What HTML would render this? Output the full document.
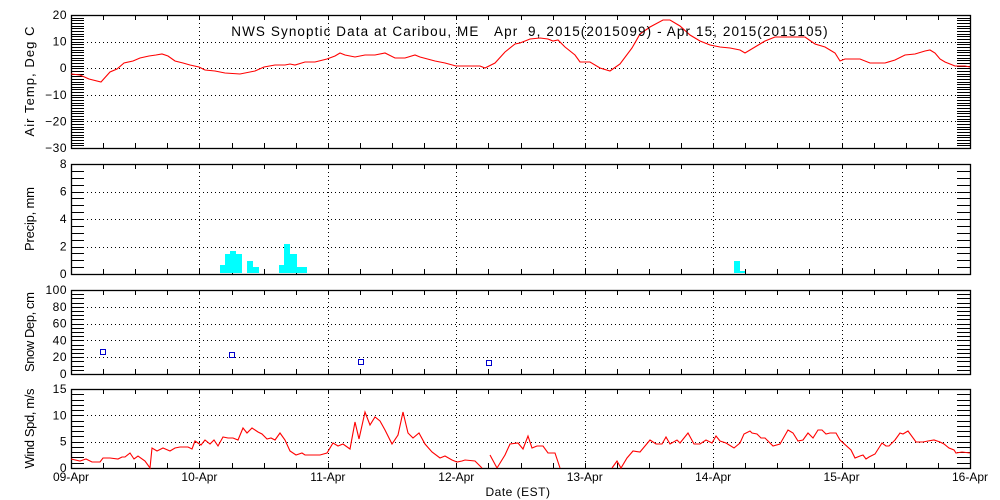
<!DOCTYPE html>
<html><head><meta charset="utf-8"><style>
html,body{margin:0;padding:0;background:#fff;width:1000px;height:500px;overflow:hidden}
text{font-family:"Liberation Sans",sans-serif;font-size:12px;fill:#000}
.yt{font-size:13px}
.tt{font-size:13.5px;letter-spacing:1.1px}
</style></head><body>
<svg id="s" width="1000" height="500" xmlns="http://www.w3.org/2000/svg"></svg>
<script>
const s=document.getElementById('s');let h='';
const X0=71,X1=970,DX=(X1-X0)/7;
function ln(x1,y1,x2,y2,st){h+=`<line x1="${x1}" y1="${y1}" x2="${x2}" y2="${y2}" stroke="#000" stroke-width="1" ${st||''}/>`;}
function txt(x,y,t,a,extra){h+=`<text x="${x}" y="${y}" text-anchor="${a||'end'}" ${extra||''}>${t}</text>`;}
const dot='stroke-dasharray="1,3"';
function panel(top,bot,vmin,vmax,major,minor,title,tl){
  const Y=v=>bot-(v-vmin)/(vmax-vmin)*(bot-top);
  for(let d=1;d<7;d++){const x=Math.round(X0+d*DX)+.5;ln(x,top,x,bot,dot);}
  for(let v=vmin+major;v<vmax;v+=major){const y=Math.round(Y(v))+.5;ln(X0,y,X1,y,dot);}
  for(let v=vmin;v<=vmax+1e-9;v+=minor){const y=Math.round(Y(v))+.5;ln(X0,y,X0+13,y);ln(X1-13,y,X1,y);}
  for(let i=1;i<28;i++){const x=Math.round(X0+i*DX/4)+.5;ln(x,top,x,top+5);ln(x,bot-5,x,bot);}
  h+=`<rect x="${X0+.5}" y="${top+.5}" width="${X1-X0}" height="${bot-top}" fill="none" stroke="#000" stroke-width="1.3"/>`;
  for(let v=vmin;v<=vmax+1e-9;v+=major){txt(67,Y(v)+4,String(v).replace('-','−'),'end','style="letter-spacing:0.5px"');}
  const cy=(top+bot)/2;
  h+=`<text class="yt" x="0" y="0" text-anchor="middle" textLength="${tl}" lengthAdjust="spacing" transform="translate(34,${cy}) rotate(-90)">${title}</text>`;
  return Y;
}
function poly(pts){h+=`<polyline fill="none" stroke="#f00" stroke-width="1.1" points="${pts}"/>`;}
panel(15,148,-30,20,10,1,'Air Temp, Deg C',110);
poly("71,74 80,75 89,79 101,82 110,72 117,69 124,63 133,61 140,58 149,56 156,55 162,54 168,56 175,61 183,63 190,65 199,67 205,70 215,71 225,73 240,74 255,71 264,67 275,65 285,65 290,64 295,65 305,62 315,62 327,59 335,56 340,53 345,55 355,57 365,55 375,55 385,53 395,58 405,58 415,55 420,57 435,61 445,63 456,66 470,66 480,66 485,68 495,63 505,52 515,44 520,43 530,39 540,38 548,39 553,41 558,40 565,47 575,55 580,62 590,62 600,68 610,71 620,64 632,48 640,34 650,27 663,20 670,20 680,26 690,35 700,41 710,45 720,47 730,48 740,50 745,53 755,47 765,41 775,37 790,37 805,37 815,44 825,47 835,53 840,61 845,59 860,59 870,63 885,63 895,60 905,55 915,54 925,51 930,50 935,53 940,59 945,62 955,66 965,66 970,67");
txt(530,36,'NWS Synoptic Data at Caribou, ME&#160;&#160;&#160;Apr&#160;&#160;9, 2015(2015099) - Apr 15, 2015(2015105)','middle','class="tt"');
panel(164,274,0,8,2,0.5,'Precip, mm',64);
[[220,225,265],[225,230,254],[230,236,251],[236,242,254],[247,253,261],[253,259,267],[279,284,265],[284,290,244],[290,297,254],[297,307,267],[734,740,261],[740,745,271]].forEach(b=>{h+=`<rect x="${b[0]}" y="${b[2]}" width="${b[1]-b[0]}" height="${273-b[2]}" fill="#0ff"/>`;});
panel(290,374,0,100,20,5,'Snow Dep, cm',80);
[[101,349],[230,352],[359,359],[487,360]].forEach(p=>{h+=`<rect x="${p[0]-.5}" y="${p[1]+.5}" width="5" height="5" fill="none" stroke="#00c" stroke-width="1"/>`;});
panel(389,468,0,15,5,1,'Wind Spd, m/s',80);
poly("71,459 80,461 86,459 92,462 100,462 103,458 110,458 118,459 122,457 125,457 130,453 134,459 138,456 145,461 150,468 152,448 157,451 163,448 170,451 175,448 180,447 188,447 192,449 195,441 201,445 205,440 210,444 214,440 218,446 223,437 228,438 233,438 238,440 243,428 247,433 252,428 258,432 262,434 267,439 271,438 275,440 280,433 285,440 290,451 296,455 302,453 305,455 315,455 320,455 327,453 333,443 338,446 343,444 350,449 355,422 359,439 365,412 370,425 375,417 380,421 385,430 392,444 398,435 403,412 408,433 413,438 419,433 425,444 432,452 440,458 445,456 452,460 457,462 462,461 465,460 475,461 482,468");
poly("490,455 497,468");poly("497,468 505,455 510,444 518,443 523,449 528,436 532,448 537,446 543,446 548,453 555,453 560,468");
poly("612,468 617,461 621,468 627,458 633,451 640,452 650,440 656,444 662,444 666,437 670,444 677,440 680,443 688,433 694,444 700,444 706,440 712,443 716,436 720,441 726,443 734,448 740,443 744,434 750,431 752,433 757,434 761,438 765,438 773,446 780,444 788,430 793,433 798,441 803,440 808,433 813,438 818,430 822,430 826,434 830,433 836,433 840,440 851,450 855,458 860,456 863,455 866,459 869,457 875,454 882,443 886,446 889,446 895,440 900,433 903,434 908,431 916,442 923,442 928,441 934,440 940,442 944,444 949,448 954,450 956,453 962,452 970,453");
const days=['09-Apr','10-Apr','11-Apr','12-Apr','13-Apr','14-Apr','15-Apr','16-Apr'];
days.forEach((d,i)=>txt(X0+i*DX,481,d,'middle'));
txt(518,496,'Date (EST)','middle','style="letter-spacing:0.5px"');
s.innerHTML=h;
</script>
</body></html>
